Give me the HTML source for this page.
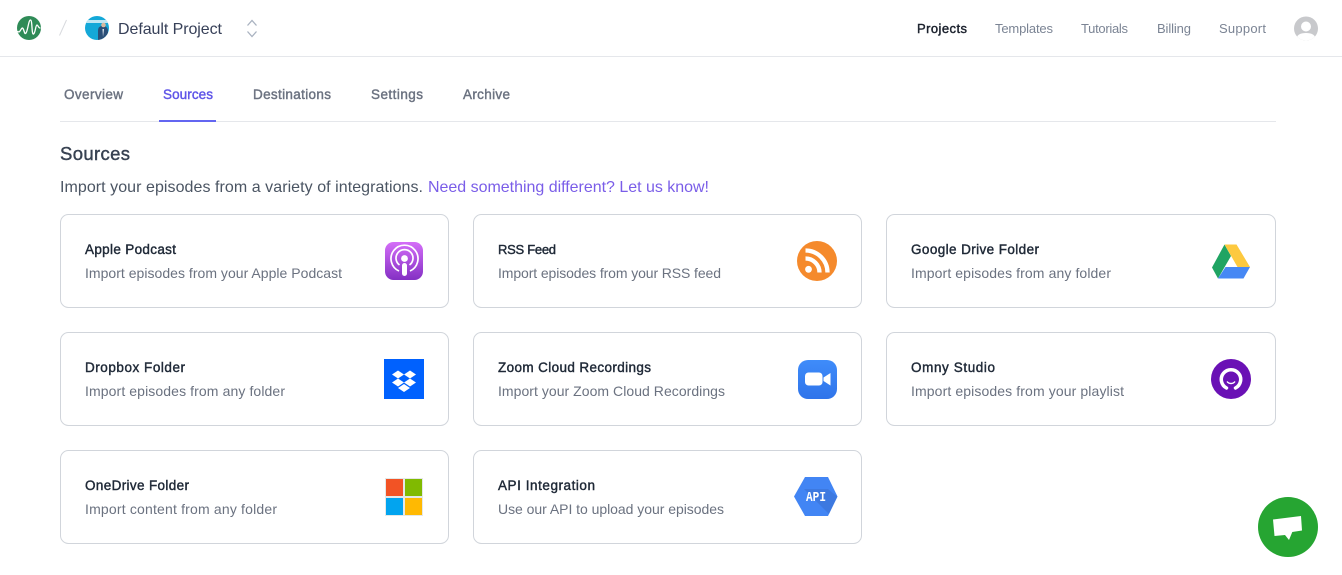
<!DOCTYPE html>
<html lang="en">
<head>
<meta charset="utf-8">
<title>Sources</title>
<style>
html,body{margin:0;padding:0;background:#fff;width:1342px;height:575px;overflow:hidden}
svg{display:block}
text{font-family:"Liberation Sans",sans-serif;white-space:pre}
.sb{stroke:currentColor;stroke-width:.42px}
.nav{font-size:13px;fill:#7b8494}
.tab{font-size:13.500px;fill:#6b7280;color:#6b7280}
.t{font-size:13.500px;fill:#1f2937;color:#1f2937}
.s{font-size:14px;fill:#6b7280}
.c{fill:#fff;stroke:#d1d5db;stroke-width:1}
</style>
</head>
<body>
<svg width="1342" height="575" viewBox="0 0 1342 575" xmlns="http://www.w3.org/2000/svg">
<defs>
<linearGradient id="pod" x1="0" y1="0" x2="0" y2="1"><stop offset="0" stop-color="#d46ef8"/><stop offset="1" stop-color="#8430c4"/></linearGradient>
<linearGradient id="zm" x1="0" y1="0" x2="0" y2="1"><stop offset="0" stop-color="#3f8cfa"/><stop offset="1" stop-color="#2f74ea"/></linearGradient>
<clipPath id="av"><circle cx="97" cy="28" r="12"/></clipPath>
<clipPath id="us"><circle cx="1306" cy="28.500" r="12"/></clipPath>
<clipPath id="hex"><path d="M805 477H828L837.500 496.500L828 516H805L794 496.500Z"/></clipPath>
</defs>

<!-- header -->
<rect x="0" y="56" width="1342" height="1" fill="#e5e7eb"/>
<circle cx="29" cy="28" r="12" fill="#2f8b57"/>
<path d="M18 31.500C20 34 21.500 26 23 28.500C24.500 31 24.500 35 26 33C28 30 28.500 20 30.500 20C32.500 20 31.500 35 33.500 34C35.500 33 35.500 25 37 25C38 25 38.500 28 40 28" fill="none" stroke="#fff" stroke-width="1.300" stroke-linecap="round"/>
<path d="M66.500 20L59.500 35.500" stroke="#d8dade" stroke-width="1"/>
<circle cx="97" cy="28" r="12" fill="#14a8d8"/>
<g clip-path="url(#av)">
<rect x="85" y="20" width="24" height="3" fill="#bfe6f3"/>
<path d="M98 40V31C98 27 100 26 103 26C106 26 108 28 108 31V40Z" fill="#2a4f78"/>
<circle cx="103.500" cy="25" r="2.300" fill="#d8b8a0"/>
<path d="M102.500 29L104 29L103 37Z" fill="#e8eef4"/>
</g>
<text x="118" y="34" font-size="16" fill="#374058" textLength="104" lengthAdjust="spacing">Default Project</text>
<path d="M247.500 25.500L252 20.500L256.500 25.500M247.500 31.500L252 36.500L256.500 31.500" fill="none" stroke="#a9b2c0" stroke-width="1.300"/>

<text x="917" y="33" class="nav sb" style="fill:#1a202c;color:#1a202c" textLength="50" lengthAdjust="spacing">Projects</text>
<text x="995" y="33" class="nav" textLength="58" lengthAdjust="spacing">Templates</text>
<text x="1081" y="33" class="nav" textLength="47" lengthAdjust="spacing">Tutorials</text>
<text x="1157" y="33" class="nav" textLength="34" lengthAdjust="spacing">Billing</text>
<text x="1219" y="33" class="nav" textLength="47" lengthAdjust="spacing">Support</text>
<circle cx="1306" cy="28.500" r="12" fill="#c8c9cc"/>
<g clip-path="url(#us)" fill="#fff">
<circle cx="1306" cy="26.500" r="5"/>
<path d="M1296 41C1296 35 1300 33 1306 33C1312 33 1316 35 1316 41Z"/>
</g>

<!-- tabs -->
<rect x="60" y="121" width="1216" height="1" fill="#e5e7eb"/>
<text x="64" y="99" class="tab sb" textLength="59" lengthAdjust="spacing">Overview</text>
<text x="163" y="99" class="tab sb" style="fill:#5f55e8;color:#5f55e8" textLength="50" lengthAdjust="spacing">Sources</text>
<text x="253" y="99" class="tab sb" textLength="78" lengthAdjust="spacing">Destinations</text>
<text x="371" y="99" class="tab sb" textLength="52" lengthAdjust="spacing">Settings</text>
<text x="463" y="99" class="tab sb" textLength="47" lengthAdjust="spacing">Archive</text>
<rect x="159" y="120" width="57" height="2" fill="#6366f1"/>

<!-- heading -->
<text x="60" y="160" font-size="18.500" class="sb" style="fill:#374151;color:#374151" textLength="70" lengthAdjust="spacing">Sources</text>
<text x="60" y="192" font-size="16" fill="#4b5563" textLength="363" lengthAdjust="spacing">Import your episodes from a variety of integrations.</text>
<text x="428" y="192" font-size="16" fill="#7a5de8" textLength="281" lengthAdjust="spacing">Need something different? Let us know!</text>

<!-- cards -->
<rect class="c" x="60.500" y="214.500" width="388" height="93" rx="8"/>
<rect class="c" x="473.500" y="214.500" width="388" height="93" rx="8"/>
<rect class="c" x="886.500" y="214.500" width="389" height="93" rx="8"/>
<rect class="c" x="60.500" y="332.500" width="388" height="93" rx="8"/>
<rect class="c" x="473.500" y="332.500" width="388" height="93" rx="8"/>
<rect class="c" x="886.500" y="332.500" width="389" height="93" rx="8"/>
<rect class="c" x="60.500" y="450.500" width="388" height="93" rx="8"/>
<rect class="c" x="473.500" y="450.500" width="388" height="93" rx="8"/>

<text x="85" y="254" class="t sb" textLength="91" lengthAdjust="spacing">Apple Podcast</text>
<text x="85" y="278" class="s" textLength="257" lengthAdjust="spacing">Import episodes from your Apple Podcast</text>
<text x="498" y="254" class="t sb" style="font-size:13px" textLength="58" lengthAdjust="spacing">RSS Feed</text>
<text x="498" y="278" class="s" textLength="223" lengthAdjust="spacing">Import episodes from your RSS feed</text>
<text x="911" y="254" class="t sb" textLength="128" lengthAdjust="spacing">Google Drive Folder</text>
<text x="911" y="278" class="s" textLength="200" lengthAdjust="spacing">Import episodes from any folder</text>

<text x="85" y="372" class="t sb" textLength="100" lengthAdjust="spacing">Dropbox Folder</text>
<text x="85" y="396" class="s" textLength="200" lengthAdjust="spacing">Import episodes from any folder</text>
<text x="498" y="372" class="t sb" textLength="153" lengthAdjust="spacing">Zoom Cloud Recordings</text>
<text x="498" y="396" class="s" textLength="227" lengthAdjust="spacing">Import your Zoom Cloud Recordings</text>
<text x="911" y="372" class="t sb" textLength="84" lengthAdjust="spacing">Omny Studio</text>
<text x="911" y="396" class="s" textLength="213" lengthAdjust="spacing">Import episodes from your playlist</text>

<text x="85" y="490" class="t sb" textLength="104" lengthAdjust="spacing">OneDrive Folder</text>
<text x="85" y="514" class="s" textLength="192" lengthAdjust="spacing">Import content from any folder</text>
<text x="498" y="490" class="t sb" textLength="97" lengthAdjust="spacing">API Integration</text>
<text x="498" y="514" class="s" textLength="226" lengthAdjust="spacing">Use our API to upload your episodes</text>

<!-- apple podcasts -->
<rect x="385" y="242" width="38" height="38" rx="8.500" fill="url(#pod)"/>
<g fill="none" stroke="#fff" stroke-width="1.700">
<path d="M399 271A13.500 13.500 0 1 1 410 271"/>
<path d="M399.500 265A8.500 8.500 0 1 1 409.500 265"/>
</g>
<circle cx="404.500" cy="258.500" r="3.400" fill="#fff"/>
<rect x="402" y="263" width="5" height="13" rx="2.500" fill="#fff"/>

<!-- rss -->
<circle cx="817" cy="261" r="20" fill="#f58a2c"/>
<circle cx="808.500" cy="269.300" r="3.400" fill="#fff"/>
<path d="M805.500 258.500A14 14 0 0 1 819.500 272.500M805.500 250.500A22 22 0 0 1 827.500 272.500" fill="none" stroke="#fff" stroke-width="4.300"/>

<!-- drive -->
<path d="M1224.500 244.500L1231 256L1218 278.500L1212 267.500Z" fill="#1fa463"/>
<path d="M1224.500 244.500H1236.500L1250 267H1237.500Z" fill="#fdc93f"/>
<path d="M1225.500 267H1250L1243.500 278.500H1218Z" fill="#4688f4"/>

<!-- dropbox -->
<rect x="384" y="359" width="40" height="40" fill="#0061fe"/>
<path d="M398 370.500L404 374.500L398 378.500L392 374.500ZM410 370.500L416 374.500L410 378.500L404 374.500ZM398 378.500L404 382.500L398 386.500L392 382.500ZM410 378.500L416 382.500L410 386.500L404 382.500ZM404 384L410 388L404 392L398 388Z" fill="#fff"/>

<!-- zoom -->
<rect x="798" y="360" width="39" height="39" rx="10" fill="url(#zm)"/>
<rect x="805" y="372.500" width="17.500" height="13" rx="3.500" fill="#fff"/>
<path d="M823.500 377.500L830.500 373V385.500L823.500 381Z" fill="#fff"/>

<!-- omny -->
<circle cx="1231" cy="379" r="20" fill="#6a11b5"/>
<path d="M1226.500 388A9.700 9.700 0 1 1 1235.500 388" fill="none" stroke="#fff" stroke-width="3.500" stroke-linecap="round"/>
<path d="M1227 381.500A5 5 0 0 0 1235 381.500" fill="none" stroke="#fff" stroke-width="1.400"/>

<!-- microsoft -->
<rect x="385" y="478" width="38" height="38" fill="#e4e8e8"/>
<rect x="386" y="479" width="17" height="17" fill="#f25325"/>
<rect x="405" y="479" width="17" height="17" fill="#80ba01"/>
<rect x="386" y="498" width="17" height="17" fill="#02a4ef"/>
<rect x="405" y="498" width="17" height="17" fill="#ffb902"/>

<!-- api -->
<path d="M805 477H828L837.500 496.500L828 516H805L794 496.500Z" fill="#4285f4"/>
<path d="M804 489L831 516H840V499L828 489Z" fill="#3a6fd0" opacity=".55" clip-path="url(#hex)"/>
<text x="806" y="501" font-size="13.500" font-weight="700" style="font-family:'Liberation Mono',monospace" fill="#fff" textLength="20" lengthAdjust="spacingAndGlyphs">API</text>

<!-- chat -->
<circle cx="1288" cy="527" r="30" fill="#26a532"/>
<path d="M1273 519.500L1301 516L1302 530.500L1292.300 532L1289 540L1285 535L1274.500 536Z" fill="#fff"/>
</svg>
</body>
</html>
